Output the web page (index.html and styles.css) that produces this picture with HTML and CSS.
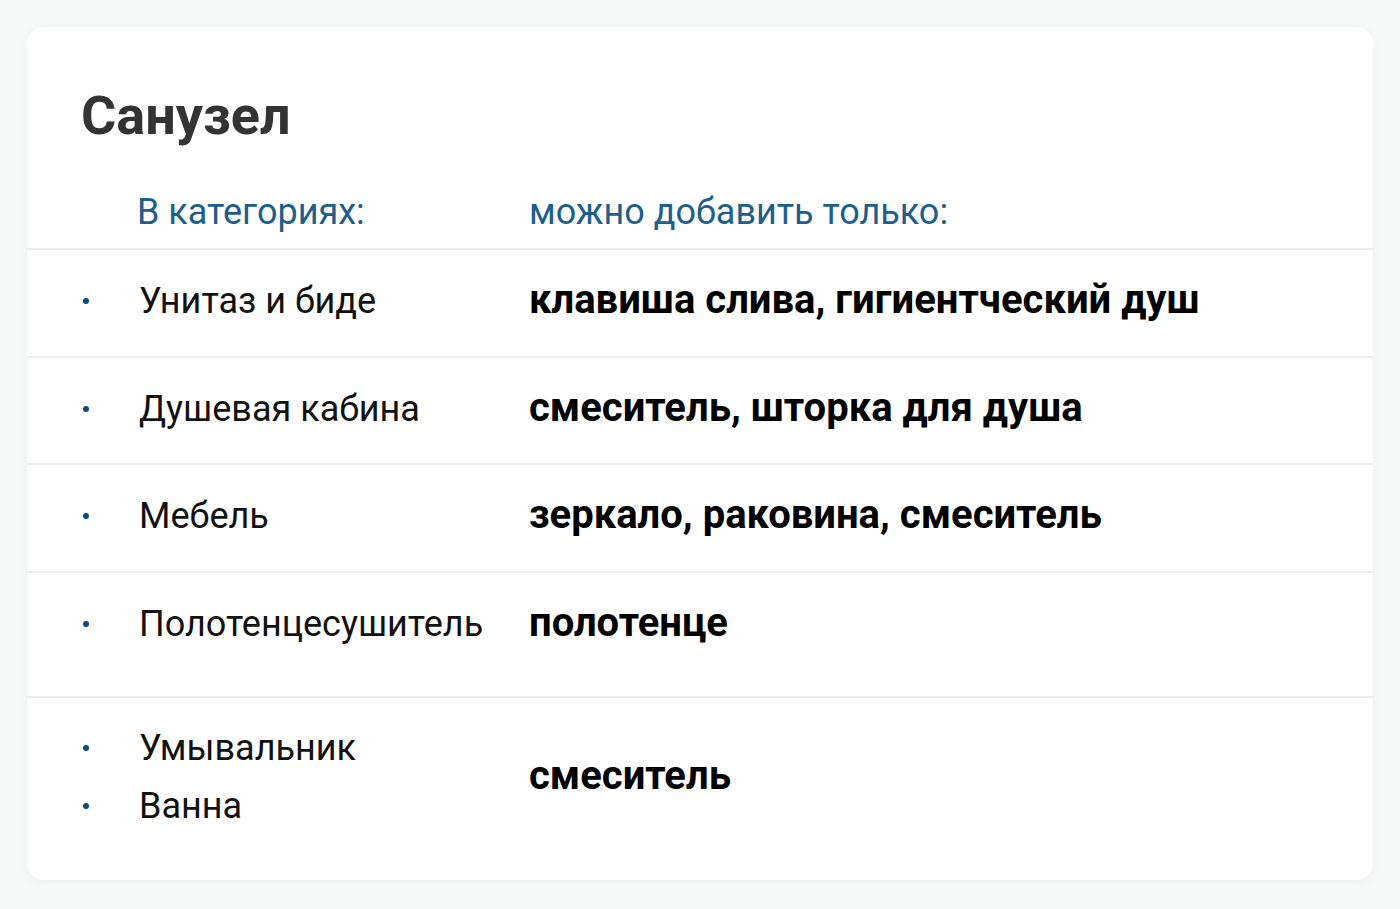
FILE: index.html
```html
<!DOCTYPE html>
<html lang="ru">
<head>
<meta charset="utf-8">
<title>Санузел</title>
<link rel="stylesheet" href="styles.css">
</head>
<body>
<div class="page">
  <section class="card">
    <h1 class="title">Санузел</h1>
    <div class="row head">
      <div class="cell-left"><span class="head-text">В категориях:</span></div>
      <div class="cell-right"><span class="head-text">можно добавить только:</span></div>
    </div>
    <div class="row">
      <ul class="cell-left list"><li>Унитаз и биде</li></ul>
      <div class="cell-right val">клавиша слива, гигиентческий душ</div>
    </div>
    <div class="row">
      <ul class="cell-left list"><li>Душевая кабина</li></ul>
      <div class="cell-right val">смеситель, шторка для душа</div>
    </div>
    <div class="row">
      <ul class="cell-left list"><li>Мебель</li></ul>
      <div class="cell-right val">зеркало, раковина, смеситель</div>
    </div>
    <div class="row tall">
      <ul class="cell-left list"><li>Полотенцесушитель</li></ul>
      <div class="cell-right val">полотенце</div>
    </div>
    <div class="row last">
      <ul class="cell-left list"><li>Умывальник</li><li>Ванна</li></ul>
      <div class="cell-right val">смеситель</div>
    </div>
  </section>
</div>
</body>
</html>
```
FILE: styles.css
```css
html, body {
  margin: 0;
  padding: 0;
}
body {
  background: #f8f9f9;
  font-family: Roboto, "Noto Sans", sans-serif;
  color: #000;
}
.page {
  padding: 27px;
}
.card {
  background: #fff;
  border-radius: 16px;
  box-shadow: 0 2px 10px rgba(0, 0, 0, 0.05);
  padding-top: 57px;
  height: 853px;
  box-sizing: border-box;
  overflow: hidden;
}
.title {
  margin: 0 0 42px;
  padding-left: 54px;
  font-size: 54px;
  line-height: 64px;
  font-weight: 700;
  color: #333;
}
.row {
  display: grid;
  grid-template-columns: 502px 1fr;
  align-items: start;
  border-bottom: 2px solid #eeeeee;
  padding: 28px 0 32.5px;
}
.row.head {
  padding: 0 0 14px;
}
.row.tall {
  padding-bottom: 50px;
}
.row.last {
  border-bottom: none;
  padding-top: 27px;
  align-items: center;
}
.head-text {
  font-size: 36px;
  line-height: 44px;
  color: #1d5e8c;
}
.head .cell-left {
  padding-left: 110px;
}
.list {
  list-style: none;
  margin: 0;
  padding: 1px 0 0 56px;
  display: flex;
  flex-direction: column;
  gap: 14px;
}
.list li {
  font-size: 36px;
  line-height: 44px;
  display: flex;
  align-items: center;
  gap: 50px;
  color: #111;
}
.list li::before {
  content: "";
  width: 6px;
  height: 6px;
  border-radius: 50%;
  background: #0d4a7e;
  flex: none;
}
.val {
  font-size: 40px;
  line-height: 44px;
  font-weight: 700;
  color: #000;
}
```
